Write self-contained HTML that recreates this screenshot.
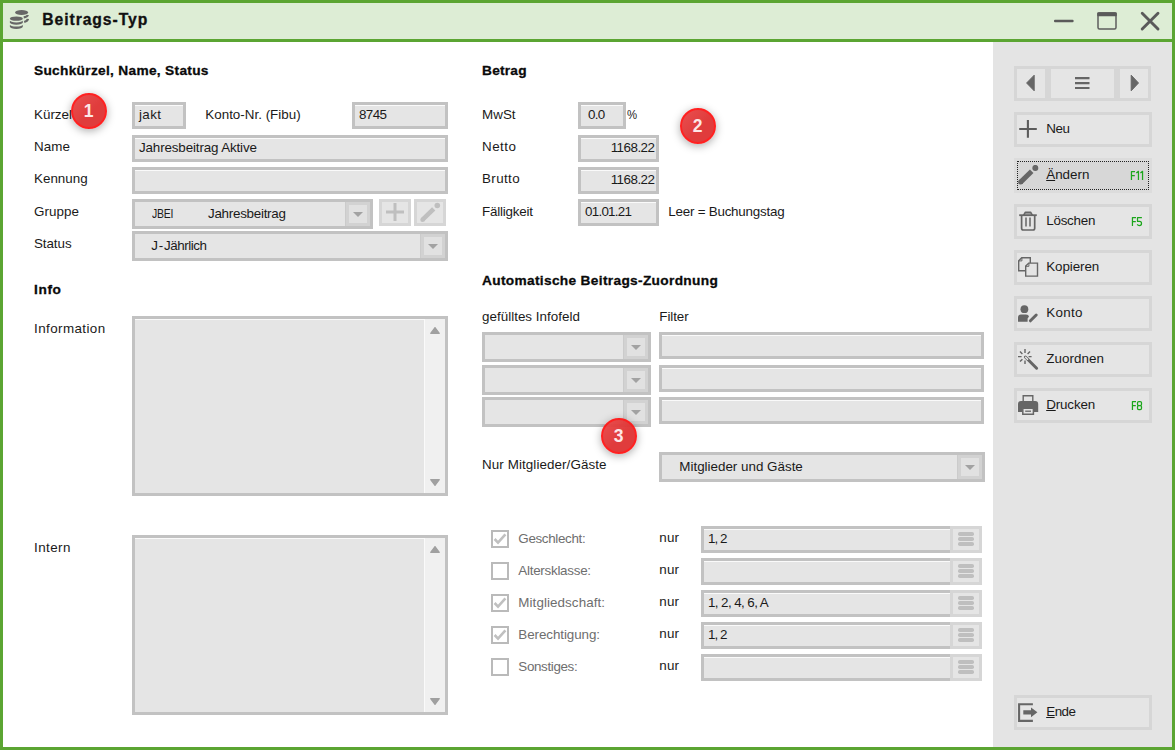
<!DOCTYPE html>
<html><head><meta charset="utf-8"><title>Beitrags-Typ</title>
<style>
html,body{margin:0;padding:0}
body{width:1175px;height:750px;position:relative;overflow:hidden;background:#fff;font-family:"Liberation Sans",sans-serif;font-size:13.4px;color:#1a1a1a}
#fr{position:absolute;left:0;top:0;width:1175px;height:750px;box-sizing:border-box;border:3px solid #5ba532}
#tb{position:absolute;left:3px;top:3px;width:1169px;height:36px;background:#ddedd5;border-bottom:3px solid #5ba532}
#side{position:absolute;left:993px;top:42px;width:179px;height:705px;background:#e4e4e4}
.t{position:absolute;line-height:20px;white-space:nowrap}
.f{position:absolute;box-sizing:border-box;border:3px solid #c2c2c2;background:#e5e5e5;box-shadow:inset 0 1px 0 rgba(255,255,255,.8)}
.cx{box-shadow:none}
.dd{position:absolute;right:0;top:0;bottom:0;width:24px;box-sizing:border-box;border:3px solid #d2d2d2;background:#e1e1e1;box-shadow:-1px 0 0 #cbcbcb}
.nr{border-right:none}
.dd svg{position:absolute;left:4px;top:7px}
.b{position:absolute;box-sizing:border-box;border:3px solid #d6d6d6;background:#e5e5e5}
.b>svg{display:block}
.big.foc{background:#d7d7d7;border-color:#dcdcdc}
.big.foc:after{content:"";position:absolute;left:0;top:0;right:0;bottom:0;border:1px dotted #222}
.sc{color:#159a15;font-size:12.5px;transform:scaleX(.76);transform-origin:right center}
.sb{position:absolute;right:0;top:0;bottom:0;width:21px;background:#f0f0f0;border-left:1px solid #fafafa;box-sizing:border-box}
.cb{position:absolute;width:18px;height:18px;box-sizing:border-box;border:2px solid #bababa;background:#fff}
.cb svg{display:block}
.lb i{display:block;width:16px;height:3.6px;border-radius:1.8px;background:#bfbfbf;margin:0 0 1.4px 5px}
.lb i:first-child{margin-top:3.3px}
.c{position:absolute;width:36.6px;height:36.6px;box-sizing:border-box;border-radius:50%;border:2px solid #ff1616;background:linear-gradient(135deg,#e84848,#df3232 55%);opacity:.95;color:#fde6e6;font-weight:bold;font-size:17.5px;line-height:33px;text-indent:-1px;text-align:center;box-shadow:0 2px 8px rgba(0,0,0,.34)}
</style></head>
<body>
<div id="fr"></div>
<div id="tb"></div>
<div id="side"></div>
<svg style="position:absolute;left:8px;top:8px" width="24" height="24" viewBox="8 8 24 24">
<g fill="#676767">
<ellipse cx="21.6" cy="12.55" rx="6.5" ry="2.45"/>
<path d="M9.9 25V26.5A6.45 2.45 0 0 0 22.8 26.5V25Z"/>
<ellipse cx="16.35" cy="24.3" rx="6.6" ry="2.3" fill="#ddedd5"/>
<path d="M9.9 20.8V22.3A6.45 2.45 0 0 0 22.8 22.3V20.8Z"/>
<ellipse cx="16.35" cy="20.1" rx="6.6" ry="2.3" fill="#ddedd5"/>
<ellipse cx="16.35" cy="18.65" rx="6.5" ry="2.2"/>
</g>
<g fill="none" stroke="#676767" stroke-width="2.3" stroke-linecap="butt">
<path d="M23.7 17.3 C25.8 17 27.5 16.3 27.9 15"/>
<path d="M24.2 22 C26.3 21.4 27.7 20.6 27.9 18.9"/>
</g>
</svg>
<div class="t" style="top:10px;font-size:15.70px;letter-spacing:0.927px;font-weight:bold;-webkit-text-stroke:.3px currentColor;color:#111;left:42.3px;">Beitrags-Typ</div>
<svg style="position:absolute;left:1050px;top:8px" width="115" height="26" viewBox="1050 8 115 26">
<rect x="1054" y="19.7" width="19.6" height="2.5" rx="1" fill="#5a5a5a"/>
<rect x="1098" y="13" width="18" height="16" rx="1.5" fill="none" stroke="#5e5e5e" stroke-width="1.5"/>
<rect x="1097.2" y="12.2" width="19.6" height="4" rx="1" fill="#5a5a5a"/>
<path d="M1142.2 13.2L1158 29M1158 13.2L1142.2 29" stroke="#5a5a5a" stroke-width="2.9" stroke-linecap="round"/>
</svg>
<div class="t" style="top:61px;font-size:13.70px;letter-spacing:0.309px;font-weight:bold;-webkit-text-stroke:.3px currentColor;color:#0a0a0a;left:34.0px;">Suchkürzel, Name, Status</div>
<div class="t" style="top:105px;font-size:13.40px;left:34.0px;">Kürzel</div>
<div class="t" style="top:137px;font-size:13.40px;letter-spacing:0.051px;left:34.0px;">Name</div>
<div class="t" style="top:169px;font-size:13.40px;letter-spacing:0.008px;left:34.0px;">Kennung</div>
<div class="t" style="top:202px;font-size:13.40px;letter-spacing:0.041px;left:34.0px;">Gruppe</div>
<div class="t" style="top:234px;font-size:13.40px;letter-spacing:-0.078px;left:34.0px;">Status</div>
<div class="f" style="left:132px;top:102px;width:54px;height:27px"></div>
<div class="t" style="top:105px;font-size:13.40px;letter-spacing:0.382px;left:139.0px;">jakt</div>
<div class="t" style="top:105px;font-size:13.40px;letter-spacing:0.005px;left:205.3px;">Konto-Nr. (Fibu)</div>
<div class="f" style="left:352px;top:102px;width:96px;height:27px"></div>
<div class="t" style="top:105px;font-size:13.40px;letter-spacing:-0.604px;left:359.0px;">8745</div>
<div class="f" style="left:132px;top:135px;width:316px;height:27px"></div>
<div class="t" style="top:138px;font-size:13.40px;letter-spacing:-0.140px;left:139.0px;">Jahresbeitrag Aktive</div>
<div class="f" style="left:132px;top:167px;width:316px;height:27px"></div>
<div class="f cx" style="left:132px;top:199px;width:241px;height:30px"><div class="dd"><svg width="10" height="5" viewBox="0 0 10 5"><path d="M0 0H10L5 5Z" fill="#a2a2a2"/></svg></div></div>
<div class="t" style="top:204px;font-size:13.40px;letter-spacing:-0.300px;left:151.5px;transform:scaleX(.78);transform-origin:0 50%;">JBEI</div>
<div class="t" style="top:204px;font-size:13.40px;letter-spacing:-0.266px;left:208.0px;">Jahresbeitrag</div>
<div class="b" style="left:379px;top:199px;width:32px;height:27px"><svg width="26" height="21" viewBox="0 0 26 21"><path d="M13 1V19M4 10H22" stroke="#bfbfbf" stroke-width="3"/></svg></div>
<div class="b" style="left:414px;top:199px;width:32px;height:27px"><svg width="26" height="21" viewBox="0 0 26 21"><g transform="translate(3 .6)" fill="#bfbfbf"><path d="M2.6 17.1L13.7 6.3" stroke="#bfbfbf" stroke-width="4.6" stroke-linecap="butt"/><circle cx="2.6" cy="17.1" r="2.3"/><circle cx="17.3" cy="2.9" r="2.8"/></g></svg></div>
<div class="f cx" style="left:132px;top:231px;width:316px;height:30px"><div class="dd"><svg width="10" height="5" viewBox="0 0 10 5"><path d="M0 0H10L5 5Z" fill="#a2a2a2"/></svg></div></div>
<div class="t" style="top:236px;font-size:13.40px;letter-spacing:-0.453px;left:151.3px;word-spacing:-2px;">J - Jährlich</div>
<div class="t" style="top:280px;font-size:13.70px;letter-spacing:0.631px;font-weight:bold;-webkit-text-stroke:.3px currentColor;color:#0a0a0a;left:34.0px;">Info</div>
<div class="t" style="top:319px;font-size:13.40px;letter-spacing:0.417px;left:34.0px;">Information</div>
<div class="t" style="top:538px;font-size:13.40px;letter-spacing:0.447px;left:34.0px;">Intern</div>
<div class="f" style="left:132px;top:316px;width:316px;height:180px"><div class="sb"><svg style="position:absolute;left:5px;top:8px" width="10" height="7" viewBox="0 0 10 7"><path d="M5 0.6L9.3 6.3H0.7Z" fill="#a0a0a0" stroke="#a0a0a0" stroke-width="1.2" stroke-linejoin="round"/></svg><svg style="position:absolute;left:5px;bottom:7px" width="10" height="7" viewBox="0 0 10 7"><path d="M5 6.4L9.3 0.7H0.7Z" fill="#a0a0a0" stroke="#a0a0a0" stroke-width="1.2" stroke-linejoin="round"/></svg></div></div>
<div class="f" style="left:132px;top:535px;width:316px;height:180px"><div class="sb"><svg style="position:absolute;left:5px;top:8px" width="10" height="7" viewBox="0 0 10 7"><path d="M5 0.6L9.3 6.3H0.7Z" fill="#a0a0a0" stroke="#a0a0a0" stroke-width="1.2" stroke-linejoin="round"/></svg><svg style="position:absolute;left:5px;bottom:7px" width="10" height="7" viewBox="0 0 10 7"><path d="M5 6.4L9.3 0.7H0.7Z" fill="#a0a0a0" stroke="#a0a0a0" stroke-width="1.2" stroke-linejoin="round"/></svg></div></div>
<div class="t" style="top:61px;font-size:13.70px;letter-spacing:0.241px;font-weight:bold;-webkit-text-stroke:.3px currentColor;color:#0a0a0a;left:482.0px;">Betrag</div>
<div class="t" style="top:105px;font-size:13.40px;letter-spacing:0.033px;left:482.0px;">MwSt</div>
<div class="t" style="top:137px;font-size:13.40px;letter-spacing:0.493px;left:482.0px;">Netto</div>
<div class="t" style="top:169px;font-size:13.40px;letter-spacing:0.370px;left:482.0px;">Brutto</div>
<div class="t" style="top:202px;font-size:13.40px;letter-spacing:-0.208px;left:482.0px;">Fälligkeit</div>
<div class="f" style="left:578px;top:102px;width:48px;height:27px"></div>
<div class="t" style="top:105px;font-size:13.40px;letter-spacing:-0.714px;left:588.0px;">0.0</div>
<div class="t" style="top:105px;font-size:13.40px;left:627.2px;transform:scaleX(.85);transform-origin:0 50%;">%</div>
<div class="f" style="left:578px;top:135px;width:81px;height:27px"></div>
<div class="t" style="top:138px;font-size:13.40px;letter-spacing:-0.507px;right:520.5px;">1168.22</div>
<div class="f" style="left:578px;top:167px;width:81px;height:27px"></div>
<div class="t" style="top:170px;font-size:13.40px;letter-spacing:-0.507px;right:520.5px;">1168.22</div>
<div class="f" style="left:578px;top:199px;width:81px;height:27px"></div>
<div class="t" style="top:202px;font-size:13.40px;letter-spacing:-0.737px;left:585.0px;">01.01.21</div>
<div class="t" style="top:202px;font-size:13.40px;letter-spacing:-0.231px;left:668.3px;">Leer = Buchungstag</div>
<div class="t" style="top:271px;font-size:13.70px;letter-spacing:0.331px;font-weight:bold;-webkit-text-stroke:.3px currentColor;color:#0a0a0a;left:482.0px;">Automatische Beitrags-Zuordnung</div>
<div class="t" style="top:307px;font-size:13.40px;letter-spacing:0.024px;left:482.0px;">gefülltes Infofeld</div>
<div class="t" style="top:307px;font-size:13.40px;letter-spacing:-0.076px;left:659.3px;">Filter</div>
<div class="f cx" style="left:482px;top:332px;width:169px;height:30px"><div class="dd"><svg width="10" height="5" viewBox="0 0 10 5"><path d="M0 0H10L5 5Z" fill="#a2a2a2"/></svg></div></div>
<div class="f" style="left:659px;top:332px;width:325px;height:27px"></div>
<div class="f cx" style="left:482px;top:365px;width:169px;height:30px"><div class="dd"><svg width="10" height="5" viewBox="0 0 10 5"><path d="M0 0H10L5 5Z" fill="#a2a2a2"/></svg></div></div>
<div class="f" style="left:659px;top:365px;width:325px;height:27px"></div>
<div class="f cx" style="left:482px;top:397px;width:169px;height:30px"><div class="dd"><svg width="10" height="5" viewBox="0 0 10 5"><path d="M0 0H10L5 5Z" fill="#a2a2a2"/></svg></div></div>
<div class="f" style="left:659px;top:397px;width:325px;height:27px"></div>
<div class="t" style="top:455px;font-size:13.40px;letter-spacing:0.091px;left:482.0px;">Nur Mitglieder/Gäste</div>
<div class="f cx" style="left:659px;top:452px;width:326px;height:30px"><div class="dd"><svg width="10" height="5" viewBox="0 0 10 5"><path d="M0 0H10L5 5Z" fill="#a2a2a2"/></svg></div></div>
<div class="t" style="top:457px;font-size:13.40px;letter-spacing:-0.002px;left:679.3px;">Mitglieder und Gäste</div>
<div class="cb" style="left:491px;top:530px"><svg width="14" height="14" viewBox="0 0 14 14"><path d="M1.6 7L5 10.6L12.4 2.3" fill="none" stroke="#c0c0c0" stroke-width="2.6"/></svg></div>
<div class="t" style="top:529px;font-size:13.40px;letter-spacing:-0.336px;color:#6e6e6e;left:518.3px;">Geschlecht:</div>
<div class="t" style="top:528px;font-size:13.40px;letter-spacing:0.216px;left:659.3px;">nur</div>
<div class="f nr" style="left:701px;top:526px;width:249px;height:27px"></div>
<div class="b lb" style="left:950px;top:526px;width:32px;height:27px"><i></i><i></i><i></i></div>
<div class="t" style="top:529px;font-size:13.40px;letter-spacing:-0.984px;left:708.0px;">1, 2</div>
<div class="cb" style="left:491px;top:562px"></div>
<div class="t" style="top:561px;font-size:13.40px;letter-spacing:-0.263px;color:#6e6e6e;left:518.3px;">Altersklasse:</div>
<div class="t" style="top:560px;font-size:13.40px;letter-spacing:0.216px;left:659.3px;">nur</div>
<div class="f nr" style="left:701px;top:558px;width:249px;height:27px"></div>
<div class="b lb" style="left:950px;top:558px;width:32px;height:27px"><i></i><i></i><i></i></div>
<div class="cb" style="left:491px;top:594px"><svg width="14" height="14" viewBox="0 0 14 14"><path d="M1.6 7L5 10.6L12.4 2.3" fill="none" stroke="#c0c0c0" stroke-width="2.6"/></svg></div>
<div class="t" style="top:593px;font-size:13.40px;letter-spacing:0.082px;color:#6e6e6e;left:518.3px;">Mitgliedschaft:</div>
<div class="t" style="top:592px;font-size:13.40px;letter-spacing:0.216px;left:659.3px;">nur</div>
<div class="f nr" style="left:701px;top:590px;width:249px;height:27px"></div>
<div class="b lb" style="left:950px;top:590px;width:32px;height:27px"><i></i><i></i><i></i></div>
<div class="t" style="top:593px;font-size:13.40px;letter-spacing:-0.591px;left:708.0px;">1, 2, 4, 6, A</div>
<div class="cb" style="left:491px;top:626px"><svg width="14" height="14" viewBox="0 0 14 14"><path d="M1.6 7L5 10.6L12.4 2.3" fill="none" stroke="#c0c0c0" stroke-width="2.6"/></svg></div>
<div class="t" style="top:625px;font-size:13.40px;letter-spacing:-0.074px;color:#6e6e6e;left:518.3px;">Berechtigung:</div>
<div class="t" style="top:624px;font-size:13.40px;letter-spacing:0.216px;left:659.3px;">nur</div>
<div class="f nr" style="left:701px;top:622px;width:249px;height:27px"></div>
<div class="b lb" style="left:950px;top:622px;width:32px;height:27px"><i></i><i></i><i></i></div>
<div class="t" style="top:625px;font-size:13.40px;letter-spacing:-0.984px;left:708.0px;">1, 2</div>
<div class="cb" style="left:491px;top:658px"></div>
<div class="t" style="top:657px;font-size:13.40px;letter-spacing:-0.352px;color:#6e6e6e;left:518.3px;">Sonstiges:</div>
<div class="t" style="top:656px;font-size:13.40px;letter-spacing:0.216px;left:659.3px;">nur</div>
<div class="f nr" style="left:701px;top:654px;width:249px;height:27px"></div>
<div class="b lb" style="left:950px;top:654px;width:32px;height:27px"><i></i><i></i><i></i></div>
<div class="b" style="left:1014px;top:66px;width:34px;height:35px"><svg width="28" height="29" viewBox="0 0 28 29"><path d="M17.2 6.2V21.8L9.6 14Z" fill="#666" stroke="#666" stroke-width="1" stroke-linejoin="round"/></svg></div>
<div class="b" style="left:1048px;top:66px;width:69px;height:35px"><svg width="63" height="29" viewBox="0 0 63 29"><path d="M24 9.1H38.5M24 14.1H38.5M24 19H38.5" stroke="#666" stroke-width="2.2"/></svg></div>
<div class="b" style="left:1117px;top:66px;width:34px;height:35px"><svg width="28" height="29" viewBox="0 0 28 29"><path d="M11.2 6.2V21.8L18.5 14Z" fill="#666" stroke="#666" stroke-width="1" stroke-linejoin="round"/></svg></div>
<div class="b big" style="left:1014px;top:112px;width:138px;height:35px"><svg style="position:absolute;left:1px;top:4px" width="22" height="22" viewBox="0 0 22 22"><path d="M9.9 1V18.7M1.2 10H18.8" stroke="#5c5c5c" stroke-width="2.1" fill="none"/></svg></div>
<div class="t" style="left:1046.2px;top:119px;letter-spacing:-0.391px">Neu</div>
<div class="b big foc" style="left:1014px;top:158px;width:138px;height:35px"><svg style="position:absolute;left:1px;top:4px" width="22" height="22" viewBox="0 0 22 22"><path d="M2.6 17.1L13.7 6.3" stroke="#666" stroke-width="5" stroke-linecap="butt"/><circle cx="2.6" cy="17.1" r="2.5" fill="#666"/><circle cx="17.3" cy="2.9" r="3" fill="#666"/></svg></div>
<div class="t" style="left:1046.2px;top:165px;letter-spacing:0.018px"><u>Ä</u>ndern</div>
<svg style="position:absolute;left:1130px;top:170px" width="16" height="11" viewBox="0 0 16 11"><path d="M1.45 10V1.5H5M1.45 5.5H4.8M6.3 2.9L8.45 1.3V10M10.4 2.9L12.55 1.3V10" fill="none" stroke="#1ca61c" stroke-width="1.25" stroke-linejoin="round"/></svg>
<div class="b big" style="left:1014px;top:204px;width:138px;height:35px"><svg style="position:absolute;left:1px;top:4px" width="22" height="22" viewBox="0 0 22 22"><path d="M1.2 4.2H18.8" stroke="#666" stroke-width="1.8"/><path d="M5.6 4.2L7.4 1.2H12.6L14.4 4.2Z" fill="#999" stroke="#666" stroke-width="1.5" stroke-linejoin="round"/><path d="M3.6 5V17.3Q3.6 19 5.4 19H14.9Q16.7 19 16.7 17.3V5" fill="none" stroke="#666" stroke-width="1.7"/><path d="M8 6.5V15.6M12 6.5V15.6" stroke="#666" stroke-width="1.5"/></svg></div>
<div class="t" style="left:1046.2px;top:211px;letter-spacing:-0.227px">Löschen</div>
<svg style="position:absolute;left:1131px;top:216px" width="16" height="11" viewBox="0 0 16 11"><path d="M1.45 10V1.5H5M1.45 5.5H4.8M10.9 1.5H6.5V5.4H8.6Q10.5 5.4 10.5 7.4Q10.5 9.5 8.5 9.5Q7 9.5 6.2 8.4" fill="none" stroke="#1ca61c" stroke-width="1.25" stroke-linejoin="round"/></svg>
<div class="b big" style="left:1014px;top:250px;width:138px;height:35px"><svg style="position:absolute;left:1px;top:4px" width="22" height="22" viewBox="0 0 22 22"><path d="M3.7 0.7H12.3V13.7H0.7V3.7Z" fill="#e4e4e4" stroke="#666" stroke-width="1.4"/><path d="M3.9 0.7V3.9H0.7" fill="none" stroke="#666" stroke-width="1"/><path d="M10.7 6.1H19.5V19.1H7.7V9.1Z" fill="#e4e4e4" stroke="#666" stroke-width="1.4"/><path d="M10.9 6.1V9.3H7.7" fill="none" stroke="#666" stroke-width="1"/></svg></div>
<div class="t" style="left:1046.2px;top:257px;letter-spacing:-0.077px">Kopieren</div>
<div class="b big" style="left:1014px;top:296px;width:138px;height:35px"><svg style="position:absolute;left:1px;top:4px" width="22" height="22" viewBox="0 0 22 22"><circle cx="6.4" cy="6.2" r="3.9" fill="#666"/><path d="M0 18.8V14.6Q0 11.6 3 11.6H8Q10.6 11.6 11 13.6L9.6 15.4V18.8Z" fill="#666"/><path d="M12.4 17.8L18.2 12" stroke="#666" stroke-width="3" stroke-linecap="round"/></svg></div>
<div class="t" style="left:1046.2px;top:303px;letter-spacing:0.295px">Konto</div>
<div class="b big" style="left:1014px;top:342px;width:138px;height:35px"><svg style="position:absolute;left:1px;top:4px" width="22" height="22" viewBox="0 0 22 22"><path d="M7.4 8L18.6 19.2" stroke="#666" stroke-width="3" stroke-linecap="round"/><path d="M7.6 8.2L9.6 10.2" stroke="#e8e8e8" stroke-width="1.4" stroke-linecap="round"/><path d="M7 0V4M7 11.4V15M0 7.6H3.6M10.6 7.6H13.6M2 2.6L4.4 5M9.6 5L12 2.6M4.4 10.2L2 12.6" stroke="#666" stroke-width="1.4"/></svg></div>
<div class="t" style="left:1046.2px;top:349px;letter-spacing:0.076px">Zuordnen</div>
<div class="b big" style="left:1014px;top:388px;width:138px;height:35px"><svg style="position:absolute;left:1px;top:4px" width="22" height="22" viewBox="0 0 22 22"><path d="M5.2 6.5V0.7H14.8V6.5" fill="#e4e4e4" stroke="#666" stroke-width="1.4"/><path d="M0 17V9Q0 6 3 6H17.2Q20.2 6 20.2 9V17H16V13H4.2V17Z" fill="#666"/><path d="M4.8 13.2H15.4V19.2H4.8Z" fill="#e4e4e4" stroke="#666" stroke-width="1.5"/><path d="M7.2 16.2H13" stroke="#666" stroke-width="1.3"/></svg></div>
<div class="t" style="left:1046.2px;top:395px;letter-spacing:-0.133px"><u>D</u>rucken</div>
<svg style="position:absolute;left:1131px;top:400px" width="16" height="11" viewBox="0 0 16 11"><path d="M1.45 10V1.5H5M1.45 5.5H4.8M7.8 1.5H9.2Q10.5 1.5 10.5 2.8V4.2Q10.5 5.5 9.2 5.5H7.8Q6.5 5.5 6.5 4.2V2.8Q6.5 1.5 7.8 1.5ZM7.8 5.5H9.2Q10.5 5.5 10.5 6.8V8.2Q10.5 9.5 9.2 9.5H7.8Q6.5 9.5 6.5 8.2V6.8Q6.5 5.5 7.8 5.5Z" fill="none" stroke="#1ca61c" stroke-width="1.25" stroke-linejoin="round"/></svg>
<div class="b big" style="left:1014px;top:695px;width:138px;height:35px"><svg style="position:absolute;left:1px;top:4px" width="22" height="22" viewBox="0 0 22 22"><path d="M14.9 2.2H1.1V18.9H14.9" fill="none" stroke="#666" stroke-width="2.1"/><path d="M5.3 8.3H13V5.4L19.4 10.3L13 15.2V12.4H5.3Z" fill="#666"/></svg></div>
<div class="t" style="left:1046.2px;top:702px;letter-spacing:-0.499px"><u>E</u>nde</div>
<div class="c" style="left:70.9px;top:92.8px">1</div>
<div class="c" style="left:679.9px;top:107.9px">2</div>
<div class="c" style="left:600.9px;top:417.8px">3</div>
</body></html>
